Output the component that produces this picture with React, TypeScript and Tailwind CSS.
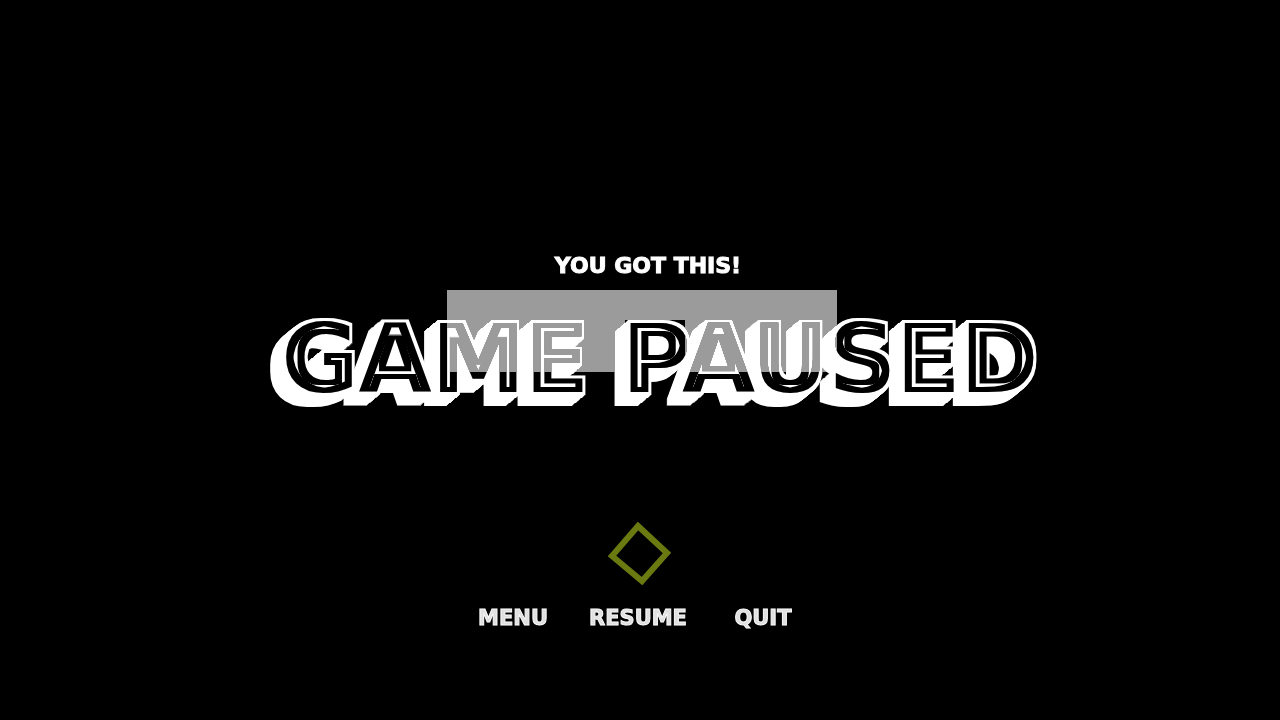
import React from 'react';

const actions = ['MENU', 'RESUME', 'QUIT'];

// Outline, inner line and lower-left extrusion for the big title
const ShadeFilter: React.FC = () => (
  <svg className="absolute" width="0" height="0" aria-hidden="true">
    <filter id="shade" x="-10%" y="-20%" width="120%" height="150%" colorInterpolationFilters="sRGB">
      <feMorphology in="SourceAlpha" operator="dilate" radius="3" result="grown" />
      <feOffset in="grown" dx="-1" dy="1" result="o1" />
      <feMerge result="s1">
        <feMergeNode in="grown" />
        <feMergeNode in="o1" />
      </feMerge>
      <feOffset in="s1" dx="-2" dy="2" result="o2" />
      <feMerge result="s2">
        <feMergeNode in="s1" />
        <feMergeNode in="o2" />
      </feMerge>
      <feOffset in="s2" dx="-4" dy="3" result="o3" />
      <feMerge result="s3">
        <feMergeNode in="s2" />
        <feMergeNode in="o3" />
      </feMerge>
      <feOffset in="s3" dx="-6" dy="5" result="o4" />
      <feMerge result="solid">
        <feMergeNode in="s3" />
        <feMergeNode in="o4" />
      </feMerge>
      <feFlood floodColor="#ffffff" />
      <feComposite in2="solid" operator="in" result="block" />
      <feFlood floodColor="#000000" />
      <feComposite in2="SourceAlpha" operator="in" result="face" />
      <feMorphology in="SourceGraphic" operator="erode" radius="7 5" result="inline" />
      <feMerge>
        <feMergeNode in="block" />
        <feMergeNode in="face" />
        <feMergeNode in="inline" />
      </feMerge>
    </filter>
  </svg>
);

const App: React.FC = () => {
  return (
    <main className="relative isolate min-h-screen bg-black text-white flex flex-col items-center justify-center pt-41 font-['DejaVu_Sans',sans-serif] font-bold">
      <ShadeFilter />

      <p className="pl-4 text-[22px] leading-6 [-webkit-text-stroke:1px_white]">YOU GOT THIS!</p>

      <div className="relative mt-3 flex w-full justify-center pt-5">
        <h1 className="pl-10 text-[94px] leading-[100px] whitespace-nowrap [filter:url(#shade)]">GAME PAUSED</h1>
        {/* Highlight panel, shows through the black parts of the title */}
        <div className="absolute inset-x-0 top-0 flex h-[82px] justify-center pl-1 mix-blend-lighten">
          <div className="w-[390px] bg-[#9b9b9b] pt-[30px] pl-[178px]">
            <div className="h-full w-[60px] bg-black" />
          </div>
        </div>
      </div>

      <svg className="mt-28 h-16 w-16" viewBox="0 0 64 64" fill="none" aria-hidden="true">
        <polygon points="30,4 59,31 34,59 4,34" stroke="#6b7a10" strokeWidth="6" />
      </svg>

      <nav className="mt-5 flex pr-1 text-[21px] leading-6">
        {actions.map(action => (
          <button
            key={action}
            type="button"
            className="w-[125px] cursor-pointer text-center text-[#e0e0e0] [-webkit-text-stroke:1px_#f8f8f8]"
          >
            {action}
          </button>
        ))}
      </nav>
    </main>
  );
};

export default App;
